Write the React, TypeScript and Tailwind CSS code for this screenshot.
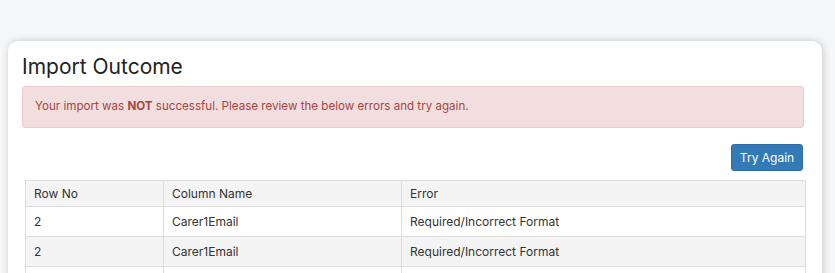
import React from 'react';

const rows = [
  { row: '2', column: 'Carer1Email', error: 'Required/Incorrect Format' },
  { row: '2', column: 'Carer1Email', error: 'Required/Incorrect Format' },
  { row: '3', column: 'Carer1Email', error: 'Required/Incorrect Format' },
];

const App = () => {
  return (
    <div className="min-h-screen bg-[#f6f7f9] pt-[41px] pl-[8px] pr-[13px] font-['Inter',sans-serif] text-[#333]">
      <div className="bg-white rounded-[10px] shadow-[1px_0_9px_rgba(0,0,0,0.2)] pl-[14px] pr-[18px] pt-[14px] pb-8">
        <h1 className="text-[21px] leading-[24px] text-[#222] mb-[7px]">Import Outcome</h1>
        <div className="border border-[#ebccd1] bg-[#f2dede] text-[#a94442] rounded-[3px] px-[12px] h-[42px] flex items-center text-[11.6px]">
          <p>
            Your import was <b>NOT</b> successful. Please review the below errors and try again.
          </p>
        </div>
        <div className="flex justify-end mt-[16px] mr-[1px]">
          <button className="bg-[#337ab7] text-white text-[12px] rounded-[3px] h-[27px] w-[72px] border border-[#2e6da4]">
            Try Again
          </button>
        </div>
        <div className="mt-[9px] ml-[3px] -mr-[2px]">
          <table className="w-full border-collapse text-[12px] text-[#333]">
            <thead>
              <tr className="bg-[#f4f4f4]">
                <th className="border border-[#dddddd] h-[26px] px-[8px] text-left font-normal w-[138px]">Row No</th>
                <th className="border border-[#dddddd] h-[26px] px-[8px] text-left font-normal w-[238px]">Column Name</th>
                <th className="border border-[#dddddd] h-[26px] px-[8px] text-left font-normal">Error</th>
              </tr>
            </thead>
            <tbody>
              {rows.map((r, i) => (
                <tr key={i} className={i % 2 === 1 ? 'bg-[#f4f4f4]' : 'bg-white'}>
                  <td className="border border-[#dddddd] h-[30px] px-[8px]">{r.row}</td>
                  <td className="border border-[#dddddd] h-[30px] px-[8px]">{r.column}</td>
                  <td className="border border-[#dddddd] h-[30px] px-[8px]">{r.error}</td>
                </tr>
              ))}
            </tbody>
          </table>
        </div>
      </div>
    </div>
  );
};

export default App;
